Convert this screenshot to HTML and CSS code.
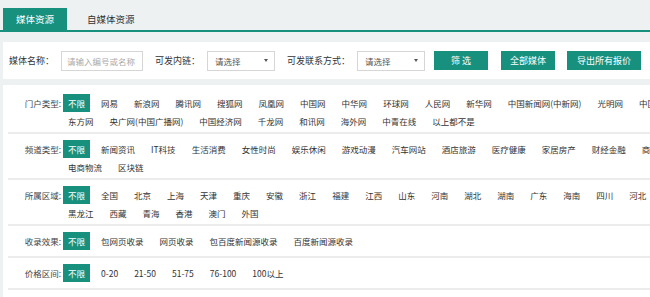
FILE: index.html
```html
<!DOCTYPE html>
<html lang="zh-CN">
<head>
    <meta charset="UTF-8">
    <title>媒体资源</title>
    <link rel="stylesheet" href="styles.css">
</head>
<body>
    <div class="pagina">
        <div class="abas">
            <a class="aba aba-ativa">媒体资源</a>
            <a class="aba">自媒体资源</a>
        </div>

        <div class="busca">
            <span class="rotulo">媒体名称：</span>
            <input type="text" class="campo" placeholder="请输入编号或名称">
            <span class="rotulo">可发内链：</span>
            <div class="seletor"><span>请选择</span><i class="seta"></i></div>
            <span class="rotulo">可发联系方式：</span>
            <div class="seletor"><span>请选择</span><i class="seta"></i></div>
            <button class="botao">筛 选</button>
            <button class="botao">全部媒体</button>
            <button class="botao botao-largo">导出所有报价</button>
        </div>

        <div class="filtros">
            <div class="linha">
                <span class="titulo">门户类型:</span>
                <div class="itens">
                    <a class="item item-ativo">不限</a>
                    <a class="item">网易</a>
                    <a class="item">新浪网</a>
                    <a class="item">腾讯网</a>
                    <a class="item">搜狐网</a>
                    <a class="item">凤凰网</a>
                    <a class="item">中国网</a>
                    <a class="item">中华网</a>
                    <a class="item">环球网</a>
                    <a class="item">人民网</a>
                    <a class="item">新华网</a>
                    <a class="item">中国新闻网(中新网)</a>
                    <a class="item">光明网</a>
                    <a class="item">中国日报网</a>
                    <a class="item">东方网</a>
                    <a class="item">央广网(中国广播网)</a>
                    <a class="item">中国经济网</a>
                    <a class="item">千龙网</a>
                    <a class="item">和讯网</a>
                    <a class="item">海外网</a>
                    <a class="item">中青在线</a>
                    <a class="item">以上都不是</a>
                </div>
            </div>
            <div class="linha">
                <span class="titulo">频道类型:</span>
                <div class="itens">
                    <a class="item item-ativo">不限</a>
                    <a class="item">新闻资讯</a>
                    <a class="item">IT科技</a>
                    <a class="item">生活消费</a>
                    <a class="item">女性时尚</a>
                    <a class="item">娱乐休闲</a>
                    <a class="item">游戏动漫</a>
                    <a class="item">汽车网站</a>
                    <a class="item">酒店旅游</a>
                    <a class="item">医疗健康</a>
                    <a class="item">家居房产</a>
                    <a class="item">财经金融</a>
                    <a class="item">商业服务</a>
                    <a class="item">电商物流</a>
                    <a class="item">区块链</a>
                </div>
            </div>
            <div class="linha">
                <span class="titulo">所属区域:</span>
                <div class="itens">
                    <a class="item item-ativo">不限</a>
                    <a class="item">全国</a>
                    <a class="item">北京</a>
                    <a class="item">上海</a>
                    <a class="item">天津</a>
                    <a class="item">重庆</a>
                    <a class="item">安徽</a>
                    <a class="item">浙江</a>
                    <a class="item">福建</a>
                    <a class="item">江西</a>
                    <a class="item">山东</a>
                    <a class="item">河南</a>
                    <a class="item">湖北</a>
                    <a class="item">湖南</a>
                    <a class="item">广东</a>
                    <a class="item">海南</a>
                    <a class="item">四川</a>
                    <a class="item">河北</a>
                    <a class="item">黑龙江</a>
                    <a class="item">西藏</a>
                    <a class="item">青海</a>
                    <a class="item">香港</a>
                    <a class="item">澳门</a>
                    <a class="item">外国</a>
                </div>
            </div>
            <div class="linha">
                <span class="titulo">收录效果:</span>
                <div class="itens">
                    <a class="item item-ativo">不限</a>
                    <a class="item">包网页收录</a>
                    <a class="item">网页收录</a>
                    <a class="item">包百度新闻源收录</a>
                    <a class="item">百度新闻源收录</a>
                </div>
            </div>
            <div class="linha">
                <span class="titulo">价格区间:</span>
                <div class="itens">
                    <a class="item item-ativo">不限</a>
                    <a class="item">0-20</a>
                    <a class="item">21-50</a>
                    <a class="item">51-75</a>
                    <a class="item">76-100</a>
                    <a class="item">100以上</a>
                </div>
            </div>
        </div>
    </div>
</body>
</html>
```

FILE: styles.css
```css
html, body {
    overflow: hidden;
}
body {
    margin: 0;
    background-color: #eef1f2;
    font-family: "Noto Sans CJK SC", "Noto Sans", sans-serif;
    color: #333;
}
.pagina {
    width: 700px;
}
.abas {
    display: flex;
    align-items: flex-end;
    height: 22px;
    padding: 8px 0 0 3px;
    border-bottom: 2px solid #17907e;
}
.aba {
    display: flex;
    align-items: center;
    height: 22px;
    padding: 0 13px;
    font-size: 9.5px;
    color: #333;
}
.aba + .aba {
    margin-left: 7px;
}
.aba-ativa {
    background-color: #17907e;
    color: #fff;
}
.busca {
    display: flex;
    align-items: center;
    height: 37px;
    margin: 10px 0 0 3px;
    padding-left: 6px;
    background-color: #fff;
    font-size: 9px;
}
.rotulo {
    margin-right: 7px;
    color: #333;
}
.campo {
    box-sizing: border-box;
    width: 82px;
    height: 20px;
    margin-right: 12px;
    padding: 0 5px;
    border: 1px solid #d6d6d6;
    font-family: inherit;
    font-size: 8.5px;
    outline: none;
}
.campo::placeholder {
    color: #aaa;
}
.seletor {
    box-sizing: border-box;
    display: flex;
    align-items: center;
    justify-content: space-between;
    width: 68px;
    height: 20px;
    margin-right: 12px;
    padding: 0 6px 0 7px;
    border: 1px solid #d6d6d6;
    font-size: 8.5px;
    color: #555;
}
.seta {
    width: 0;
    height: 0;
    border-left: 2px solid transparent;
    border-right: 2px solid transparent;
    border-top: 3px solid #555;
}
.botao {
    width: 54px;
    height: 19px;
    margin-left: -3px;
    margin-right: 16px;
    padding: 0;
    border: none;
    background-color: #17907e;
    color: #fff;
    font-family: inherit;
    font-size: 9px;
    cursor: pointer;
}
.botao + .botao {
    margin-left: -3px;
    margin-right: 15px;
}
.botao-largo {
    width: 74px;
}
.filtros {
    margin: 6px 0 0 3px;
    padding: 3px 5px 20px;
    background-color: #fff;
}
.linha {
    display: flex;
    align-items: flex-start;
    padding: 6px 0;
    border-bottom: 2px solid #ececec;
    font-size: 8.5px;
}
.titulo {
    width: 53px;
    flex-shrink: 0;
    margin-right: 2px;
    line-height: 18px;
    text-align: right;
    color: #444;
}
.itens {
    display: flex;
    flex-wrap: wrap;
    width: 632px;
}
.item {
    height: 14px;
    padding: 0 5px;
    margin-right: 6px;
    line-height: 18px;
    white-space: nowrap;
    color: #333;
}
.item-ativo {
    height: 18px;
    background-color: #17907e;
    color: #fff;
}
```
